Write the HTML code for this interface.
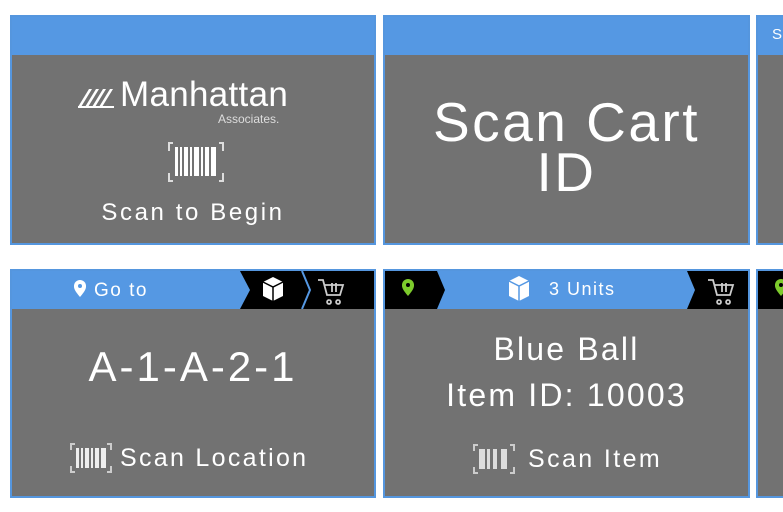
<!DOCTYPE html><html><head><style>
body{margin:0;width:783px;height:512px;background:#fff;position:relative;overflow:hidden;font-family:"Liberation Sans",sans-serif;color:#fff}
.c{position:absolute;background:#727272;border:2px solid #5596de;box-sizing:border-box}
.h{position:absolute;left:0;right:0;top:0;background:#5598e3}
.t{position:absolute;left:0;right:0;text-align:center;white-space:nowrap}
</style></head><body>
<!-- row 1 -->
<div class="c" style="left:10px;top:15px;width:366px;height:230px">
 <div class="h" style="height:38px"></div>
 <div class="t" style="top:58px;font-size:35px;letter-spacing:0.3px;left:108px;text-align:left">Manhattan</div>
 <svg style="position:absolute;left:66px;top:68px" width="40" height="24"><g fill="#fff"><polygon points="0,22 11,4 14,4 3,22"/><polygon points="7,22 18,4 21,4 10,22"/><polygon points="14,22 25,4 28,4 17,22"/><polygon points="21,22 32,4 35,4 24,22"/><rect x="0" y="21" width="36" height="2"/></g></svg>
 <div class="t" style="top:95px;font-size:12px;left:206px;text-align:left;color:#ddd">Associates.</div>
 <svg style="position:absolute;left:155px;top:124px" width="58" height="42"><g fill="none" stroke="#ddd" stroke-width="2"><path d="M6 2H2V10M52 2H56V10M2 32V40H6M56 32V40H52"/></g><g fill="#fff"><rect x="8" y="6" width="3" height="29"/><rect x="13" y="6" width="2" height="29"/><rect x="17" y="6" width="4" height="29"/><rect x="23" y="6" width="2" height="29"/><rect x="27" y="6" width="5" height="29"/><rect x="34" y="6" width="2" height="29"/><rect x="38" y="6" width="4" height="29"/><rect x="44" y="6" width="5" height="29"/></g></svg>
 <div class="t" style="top:182px;font-size:24px;letter-spacing:2.6px">Scan to Begin</div>
</div>
<div class="c" style="left:383px;top:15px;width:367px;height:230px">
 <div class="h" style="height:38px"></div>
 <div class="t" style="top:80px;font-size:55px;line-height:50px;letter-spacing:2.5px">Scan Cart<br>ID</div>
</div>
<div class="c" style="left:756px;top:15px;width:60px;height:230px">
 <div class="h" style="height:38px"></div>
 <div style="position:absolute;left:14px;top:9px;font-size:15px">S</div>
</div>
<!-- row 2 -->
<div class="c" style="left:10px;top:269px;width:366px;height:229px">
 <div class="h" style="height:38px;background:#000"></div>
 <svg style="position:absolute;left:0;top:0" width="362" height="38"><polygon points="0,0 228,0 238,19 228,38 0,38" fill="#5598e3"/><polyline points="290,0 298,19 290,38" fill="none" stroke="#5598e3" stroke-width="2"/>
 <path d="M251 11L261 6L271 11V25L261 30L251 25Z" fill="#fff"/><path d="M251 11L261 16L271 11M261 16V30" stroke="#000" stroke-width="1.5" fill="none"/>
 <path d="M306 9H311L315 24H328L331 14H313M317 29a2 2 0 1 0 .1 0M326 29a2 2 0 1 0 .1 0M320 12V21M324 12V21" stroke="#ccc" stroke-width="1.8" fill="none"/>
 <path d="M68 26C62 19 62 17 62 15a6 6 0 0 1 12 0C74 17 74 19 68 26Z" fill="#fff"/><circle cx="68" cy="15" r="2" fill="#5598e3"/>
 <text x="82" y="25" font-size="19" fill="#fff" font-family="Liberation Sans" letter-spacing="1.5">Go to</text></svg>
 <div class="t" style="top:72px;font-size:42px;letter-spacing:3px">A-1-A-2-1</div>
 <svg style="position:absolute;left:58px;top:172px" width="42" height="30"><g fill="none" stroke="#ccc" stroke-width="2"><path d="M5 1H1V7M37 1H41V7M1 23V29H5M41 23V29H37"/></g><g fill="#eee"><rect x="6" y="5" width="3" height="20"/><rect x="11" y="5" width="2" height="20"/><rect x="15" y="5" width="4" height="20"/><rect x="21" y="5" width="2" height="20"/><rect x="25" y="5" width="4" height="20"/><rect x="31" y="5" width="5" height="20"/></g></svg>
 <div class="t" style="top:173px;font-size:25px;left:108px;text-align:left;letter-spacing:2.3px">Scan Location</div>
</div>
<div class="c" style="left:383px;top:269px;width:367px;height:229px">
 <div class="h" style="height:38px;background:#000"></div>
 <svg style="position:absolute;left:0;top:0" width="363" height="38"><polygon points="52,0 302,0 310,19 302,38 52,38 60,19" fill="#5598e3"/>
 <path d="M23 25C17 18 17 16 17 14a6 6 0 0 1 12 0C29 16 29 18 23 25Z" fill="#7dcb2c"/><circle cx="23" cy="14" r="2" fill="#000"/>
 <path d="M124 10L134 5L144 10V25L134 30L124 25Z" fill="#fff"/><path d="M124 10L134 15L144 10M134 15V30" stroke="#5598e3" stroke-width="1.5" fill="none"/>
 <text x="164" y="24" font-size="18" fill="#fff" font-family="Liberation Sans" letter-spacing="1.5">3 Units</text>
 <path d="M323 9H328L332 24H345L348 14H330M334 29a2 2 0 1 0 .1 0M343 29a2 2 0 1 0 .1 0M337 12V21M341 12V21" stroke="#ccc" stroke-width="1.8" fill="none"/></svg>
 <div class="t" style="top:55px;font-size:32px;line-height:46px;letter-spacing:2.2px">Blue Ball<br>Item ID: 10003</div>
 <svg style="position:absolute;left:88px;top:173px" width="42" height="30"><g fill="none" stroke="#ccc" stroke-width="2"><path d="M5 1H1V7M37 1H41V7M1 23V29H5M41 23V29H37"/></g><g fill="#ddd"><rect x="6" y="5" width="6" height="20"/><rect x="14" y="5" width="3" height="20"/><rect x="20" y="5" width="4" height="20"/><rect x="28" y="5" width="6" height="20"/></g></svg>
 <div class="t" style="top:174px;font-size:25px;left:143px;text-align:left;letter-spacing:2.4px">Scan Item</div>
</div>
<div class="c" style="left:756px;top:269px;width:60px;height:229px">
 <div class="h" style="height:38px;background:#000"></div>
 <svg style="position:absolute;left:0;top:0" width="40" height="38"><path d="M23 25C17 18 17 16 17 14a6 6 0 0 1 12 0C29 16 29 18 23 25Z" fill="#7dcb2c"/><circle cx="23" cy="14" r="2" fill="#000"/></svg>
</div>
</body></html>
